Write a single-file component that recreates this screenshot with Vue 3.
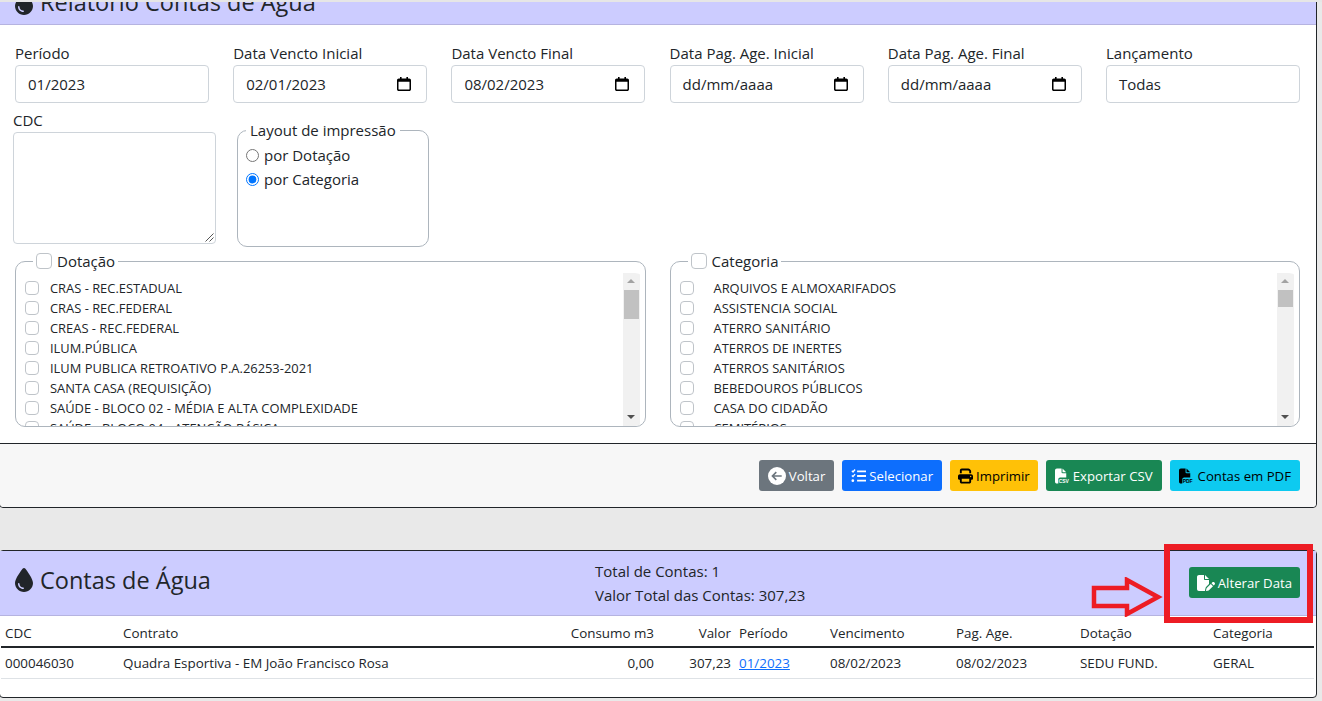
<template>
  <div class="page">
    <div class="top-edge"></div>

    <section class="card report-card">
      <header class="card-header report-header">
        <h4 class="title">
          <svg class="title-icon" viewBox="0 0 384 512"><path :d="dropPath" /></svg>
          Relatório Contas de Água
        </h4>
      </header>

      <div class="card-body">
        <div class="filters">
          <div v-for="field in filterFields" :key="field.label" class="filter">
            <label>{{ field.label }}</label>
            <div class="form-control">
              <span>{{ field.value }}</span>
              <svg v-if="field.date" class="calendar" viewBox="0 0 14 14">
                <path d="M3 0h1.6v1.6h4.8V0H11v1.6h1.2c1 0 1.8.8 1.8 1.8v8.8c0 1-.8 1.8-1.8 1.8H1.8c-1 0-1.8-.8-1.8-1.8V3.400c0-1 .8-1.800 1.800-1.800H3zM1.500 4.800v7.100c0 .4.300.7.700.7h9.600c.4 0 .7-.3.7-.7V4.800z" />
              </svg>
            </div>
          </div>
        </div>

        <div class="second-row">
          <div class="cdc">
            <label>CDC</label>
            <div class="textarea">
              <svg class="resize" viewBox="0 0 10 10"><path d="M9.500 1.500 1.500 9.500M9.500 5.500 5.500 9.500" /></svg>
            </div>
          </div>
          <fieldset class="layout-box">
            <legend>Layout de impressão</legend>
            <label class="radio"><input type="radio" name="layout" /> por Dotação</label>
            <label class="radio"><input type="radio" name="layout" checked /> por Categoria</label>
          </fieldset>
        </div>

        <div class="lists">
          <fieldset v-for="group in groups" :key="group.title" class="list-box" :class="group.cls">
            <legend><span class="check"></span>{{ group.title }}</legend>
            <div class="list-wrap">
              <ul class="list">
                <li v-for="item in group.items" :key="item"><span class="check small"></span><span class="item-text">{{ item }}</span></li>
              </ul>
              <div class="scrollbar">
                <span class="arrow up"></span>
                <span class="thumb"></span>
                <span class="arrow down"></span>
              </div>
            </div>
          </fieldset>
        </div>
      </div>

      <footer class="card-footer">
        <button class="btn secondary">
          <svg class="ico back" viewBox="0 0 512 512">
            <circle cx="256" cy="256" r="256" fill="#fff" />
            <path d="M390 256H130M236 146 126 256l110 110" fill="none" stroke="#6c757d" stroke-width="46" />
          </svg>Voltar
        </button>
        <button class="btn primary">
          <svg class="ico" viewBox="0 0 512 512">
            <path d="M30 80l38 36 70-84M30 240l38 36 70-84" fill="none" stroke="#fff" stroke-width="48" />
            <circle cx="62" cy="416" r="46" fill="#fff" />
            <path d="M208 96h304M208 256h304M208 416h304" fill="none" stroke="#fff" stroke-width="62" />
          </svg>Selecionar
        </button>
        <button class="btn warning">
          <svg class="ico" viewBox="0 0 512 512"><path :d="printPath" /></svg>Imprimir
        </button>
        <button class="btn success">
          <svg class="ico" viewBox="0 0 512 512">
            <path :d="filePath" fill="#fff" />
            <text x="124" y="500" class="ico-text" fill="#fff">CSV</text>
          </svg>Exportar CSV
        </button>
        <button class="btn info">
          <svg class="ico" viewBox="0 0 512 512">
            <path :d="filePath" />
            <text x="124" y="500" class="ico-text">PDF</text>
          </svg>Contas em PDF
        </button>
      </footer>
    </section>

    <section class="card accounts-card">
      <header class="card-header accounts-header">
        <h4 class="title">
          <svg class="title-icon" viewBox="0 0 384 512"><path :d="dropPath" /></svg>
          Contas de Água
        </h4>
        <div class="totals">
          <div>Total de Contas: 1</div>
          <div>Valor Total das Contas: 307,23</div>
        </div>
        <button class="btn success">
          <svg class="ico pen" viewBox="0 0 576 512"><path :d="filePenPath" /></svg>Alterar Data
        </button>
      </header>

      <table class="accounts">
        <colgroup>
          <col v-for="w in colWidths" :key="w.id" :style="{ width: w.px + 'px' }" />
        </colgroup>
        <thead>
          <tr>
            <th>CDC</th>
            <th>Contrato</th>
            <th class="num">Consumo m3</th>
            <th class="num">Valor</th>
            <th>Período</th>
            <th>Vencimento</th>
            <th>Pag. Age.</th>
            <th>Dotação</th>
            <th>Categoria</th>
          </tr>
        </thead>
        <tbody>
          <tr>
            <td>000046030</td>
            <td>Quadra Esportiva - EM João Francisco Rosa</td>
            <td class="num">0,00</td>
            <td class="num">307,23</td>
            <td><a href="#">01/2023</a></td>
            <td>08/02/2023</td>
            <td>08/02/2023</td>
            <td>SEDU FUND.</td>
            <td>GERAL</td>
          </tr>
        </tbody>
      </table>

      <!-- marcação vermelha por cima do print -->
      <div class="red-box"></div>
      <svg class="red-arrow" viewBox="0 0 72 40">
        <path d="M3 11h33V3l31 17-31 17v-8H3z" />
      </svg>
    </section>
  </div>
</template>

<script setup>
const dropPath =
  'M192 512C86 512 0 426 0 320C0 228.8 130.2 57.7 166.6 11.7C172.6 4.2 181.5 0 191.1 0h1.8c9.6 0 18.5 4.2 24.5 11.7C253.8 57.7 384 228.8 384 320c0 106-86 192-192 192zM96 336c0-8.8-7.2-16-16-16s-16 7.2-16 16c0 61.9 50.1 112 112 112c8.8 0 16-7.2 16-16s-7.2-16-16-16c-44.2 0-80-35.8-80-80z';
const printPath =
  'M128 0C92.7 0 64 28.7 64 64v96h64V64H354.7L384 93.3V160h64V93.3c0-17-6.7-33.3-18.7-45.3L400 18.7C388 6.7 371.7 0 354.7 0H128zM384 352v32 64H128V384 368 352H384zm64 32h32c17.7 0 32-14.3 32-32V256c0-35.3-28.7-64-64-64H64c-35.3 0-64 28.7-64 64v96c0 17.7 14.3 32 32 32H64v64c0 35.3 28.7 64 64 64H384c35.3 0 64-28.7 64-64V384zM432 248a24 24 0 1 1 0 48 24 24 0 1 1 0-48z';
const filePath =
  'M0 64C0 28.7 28.7 0 64 0H224V128c0 17.7 14.3 32 32 32H384V304H176c-35.3 0-64 28.7-64 64V512H64c-35.3 0-64-28.7-64-64V64zm384 64H256V0L384 128z';
const filePenPath =
  'M0 64C0 28.7 28.7 0 64 0H224V128c0 17.7 14.3 32 32 32H384V285.7l-86.8 86.8c-10.3 10.3-17.5 23.1-21 37.2l-18.7 74.9c-2.3 9.2-1.8 18.8 1.3 27.5H64c-35.3 0-64-28.7-64-64V64zm384 64H256V0L384 128zM549.8 235.7l14.4 14.4c15.6 15.6 15.6 40.9 0 56.6l-29.4 29.4-71-71 29.4-29.4c15.6-15.6 40.9-15.6 56.6 0zM311.9 417L441.1 287.8l71 71L382.9 487.9c-4.1 4.1-9.2 7-14.9 8.4l-60.1 15c-5.5 1.4-11.2-.2-15.2-4.2s-5.6-9.7-4.2-15.2l15-60.1c1.4-5.6 4.3-10.8 8.4-14.9z';

const filterFields = [
  { label: 'Período', value: '01/2023' },
  { label: 'Data Vencto Inicial', value: '02/01/2023', date: true },
  { label: 'Data Vencto Final', value: '08/02/2023', date: true },
  { label: 'Data Pag. Age. Inicial', value: 'dd/mm/aaaa', date: true },
  { label: 'Data Pag. Age. Final', value: 'dd/mm/aaaa', date: true },
  { label: 'Lançamento', value: 'Todas' },
];

const groups = [
  {
    title: 'Dotação',
    cls: 'dotacao',
    items: [
      'CRAS - REC.ESTADUAL',
      'CRAS - REC.FEDERAL',
      'CREAS - REC.FEDERAL',
      'ILUM.PÚBLICA',
      'ILUM PUBLICA RETROATIVO P.A.26253-2021',
      'SANTA CASA (REQUISIÇÃO)',
      'SAÚDE - BLOCO 02 - MÉDIA E ALTA COMPLEXIDADE',
      'SAÚDE - BLOCO 04 - ATENÇÃO BÁSICA',
    ],
  },
  {
    title: 'Categoria',
    cls: 'categoria',
    items: [
      'ARQUIVOS E ALMOXARIFADOS',
      'ASSISTENCIA SOCIAL',
      'ATERRO SANITÁRIO',
      'ATERROS DE INERTES',
      'ATERROS SANITÁRIOS',
      'BEBEDOUROS PÚBLICOS',
      'CASA DO CIDADÃO',
      'CEMITÉRIOS',
    ],
  },
];

const colWidths = [118, 430, 109, 77, 91, 126, 124, 133, 105].map((px, id) => ({ id, px }));
</script>

<style scoped>
.page {
  position: relative;
  height: 701px;
  overflow: hidden;
  font-family: "Open Sans", "Liberation Sans", sans-serif;
  font-size: 15px;
  color: #212529;
}

.top-edge {
  position: absolute;
  top: 0;
  left: 0;
  right: 0;
  height: 2px;
  background: #e6e6e6;
  z-index: 2;
}

.card {
  width: 1318px;
  margin-left: -1px;
  box-sizing: border-box;
  background: #fff;
  border: 1px solid #212529;
  border-radius: 4px;
}

.report-card {
  margin-top: -14px;
}

.accounts-card {
  position: relative;
  margin-top: 42px;
  height: 148px;
}

.card-header {
  box-sizing: border-box;
  height: 65px;
  display: flex;
  align-items: center;
  padding: 0 15px;
  background: #ccccff;
  border-bottom: 1px solid #b5b3e0;
}

.report-header {
  height: 38px;
}

.title {
  margin: -6px 0 0;
  display: flex;
  align-items: center;
  gap: 7px;
  font-size: 23.5px;
  font-weight: 500;
  line-height: 1.2;
}

.title-icon {
  width: 18px;
  height: 24px;
  fill: #212529;
}

.card-body {
  box-sizing: border-box;
  height: 418px;
  padding-top: 16px;
}

.filters {
  display: grid;
  grid-template-columns: repeat(6, 1fr);
  column-gap: 24.2px;
  padding: 0 16px 0 15px;
}

.filter label {
  display: block;
  height: 24px;
  line-height: 24px;
}

.form-control {
  box-sizing: border-box;
  height: 38px;
  display: flex;
  align-items: center;
  justify-content: space-between;
  padding: 0 15px 0 12px;
  border: 1px solid #ced4da;
  border-radius: 4px;
  line-height: 24px;
}

.calendar {
  width: 14px;
  height: 14px;
  fill: #000;
}

.second-row {
  display: flex;
  gap: 21px;
  margin-top: 5px;
  padding-left: 13px;
}

.cdc label {
  display: block;
  height: 24px;
  line-height: 24px;
}

.textarea {
  position: relative;
  box-sizing: border-box;
  width: 203px;
  height: 112px;
  border: 1px solid #ced4da;
  border-radius: 4px;
}

.resize {
  position: absolute;
  right: 1px;
  bottom: 1px;
  width: 10px;
  height: 10px;
  fill: none;
  stroke: #555;
  stroke-width: 1;
}

fieldset {
  box-sizing: border-box;
  margin: 0;
  min-width: 0;
  border: 1px solid #adb5bd;
  border-radius: 10px;
}

.layout-box {
  width: 192px;
  height: 129px;
  margin-top: 10px;
  padding: 1px 8px 0;
}

.layout-box legend {
  margin-left: 0;
  padding: 0 4px;
  line-height: 24px;
  float: none;
}

.radio {
  display: flex;
  align-items: center;
  gap: 5px;
  height: 24px;
}

.radio input {
  width: 13px;
  height: 13px;
  margin: 0;
  accent-color: #0075ff;
}

.lists {
  display: grid;
  grid-template-columns: 1fr 1fr;
  column-gap: 24px;
  margin-top: 2px;
  padding: 0 16px 0 15px;
}

.list-box {
  height: 178px;
  padding: 0 5px 0 9px;
  overflow: hidden;
}

.list-box legend {
  display: flex;
  align-items: center;
  gap: 5px;
  margin-left: 8px;
  padding: 0 3px;
  line-height: 24px;
}

.check {
  display: inline-block;
  box-sizing: border-box;
  width: 16px;
  height: 16px;
  background: #fff;
  border: 1px solid #bfc4c9;
  border-radius: 4px;
  flex: none;
}

.check.small {
  width: 14px;
  height: 14px;
}

.list-wrap {
  display: flex;
  height: 153px;
  overflow: hidden;
}

.list {
  flex: 1;
  list-style: none;
  margin: 0;
  padding: 5px 0 0;
}

.list li {
  display: flex;
  align-items: center;
  height: 20px;
  font-size: 12.9px;
  white-space: nowrap;
}

.dotacao .item-text {
  margin-left: 11px;
}

.categoria .item-text {
  margin-left: 20px;
}

.scrollbar {
  position: relative;
  width: 17px;
  background: #f1f1f1;
}

.thumb {
  position: absolute;
  left: 1px;
  right: 1px;
  top: 17px;
  background: #c1c1c1;
}

.dotacao .thumb {
  height: 29px;
}

.categoria .thumb {
  height: 17px;
}

.arrow {
  position: absolute;
  left: 4px;
  border-left: 4px solid transparent;
  border-right: 4px solid transparent;
}

.arrow.up {
  top: 6px;
  border-bottom: 4px solid #a3a3a3;
}

.arrow.down {
  bottom: 7px;
  border-top: 4px solid #505050;
}

.card-footer {
  box-sizing: border-box;
  height: 64px;
  display: flex;
  justify-content: flex-end;
  align-items: center;
  gap: 8px;
  padding: 0 16px;
  background: #f7f7f7;
  border-top: 1px solid #212529;
  border-radius: 0 0 4px 4px;
}

.btn {
  display: inline-flex;
  align-items: center;
  gap: 3px;
  height: 31px;
  padding: 0 9px;
  border: 0;
  border-radius: 3px;
  font-family: inherit;
  font-size: 13.2px;
  white-space: nowrap;
}

.secondary { background: #6c757d; color: #fff; }
.primary { background: #0d6efd; color: #fff; }
.warning { background: #ffc107; color: #000; padding: 0 8px; }
.success { background: #198754; color: #fff; }
.info { background: #0dcaf0; color: #000; gap: 4px; }

.ico {
  width: 15px;
  height: 16px;
  flex: none;
}

.ico.back {
  width: 18px;
  height: 18px;
}

.ico-text {
  font-family: "Liberation Sans", sans-serif;
  font-size: 170px;
  font-weight: 700;
}

.pen {
  width: 18px;
  fill: #fff;
}

.accounts-header {
  position: relative;
}

.totals {
  position: absolute;
  left: 595px;
  top: 8px;
  line-height: 24px;
}

.accounts-header .btn {
  margin-left: auto;
  margin-right: 1px;
  margin-top: -1px;
  padding: 0 8px;
}

.accounts {
  table-layout: fixed;
  width: 1313px;
  margin-left: 1px;
  border-collapse: collapse;
  font-size: 13.4px;
}

.accounts th {
  height: 31px;
  padding: 3px 4px 0;
  box-sizing: border-box;
  font-weight: 400;
  text-align: left;
  border-bottom: 2px solid #212529;
}

.accounts td {
  height: 31px;
  padding: 1px 4px 0;
  box-sizing: border-box;
  border-bottom: 1px solid #dee2e6;
  white-space: nowrap;
}

.accounts .num {
  text-align: right;
}

.accounts a {
  color: #0d6efd;
}

.red-box {
  position: absolute;
  left: 1164px;
  top: -7px;
  width: 149px;
  height: 79px;
  box-sizing: border-box;
  border: 6px solid #ed1c24;
}

.red-arrow {
  position: absolute;
  left: 1091px;
  top: 26px;
  width: 72px;
  height: 40px;
  fill: none;
  stroke: #ed1c24;
  stroke-width: 4.5;
}
</style>

<style>
html,
body {
  margin: 0;
  background: #e9e9e9;
  overflow: hidden;
}
</style>
